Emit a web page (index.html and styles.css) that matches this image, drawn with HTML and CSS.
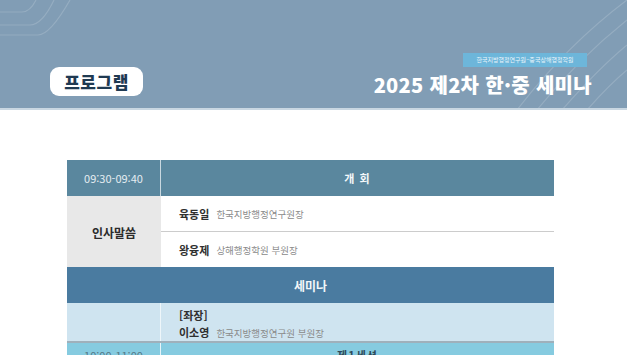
FILE: index.html
```html
<!DOCTYPE html>
<html lang="ko">
<head>
<meta charset="utf-8">
<link rel="stylesheet" href="styles.css">
</head>
<body>
<header class="hero">
  <svg class="deco deco-left" width="120" height="60" viewBox="0 0 120 60">
    <path d="M0 12 H22 Q30 12 36 0" />
    <path d="M0 25 H30 Q42 25 54 0" />
    <path d="M0 35 H38 Q50 35 70 0" />
  </svg>
  <svg class="deco deco-right" width="110" height="110" viewBox="0 0 110 110">
    <path d="M20 110 Q60 60 110 20" />
    <path d="M45 110 Q80 70 110 45" />
    <path d="M70 110 Q92 85 110 70" />
    <path d="M0 110 Q50 45 110 0" />
  </svg>
  <div class="hero-inner">
    <div class="pill">프로그램</div>
    <div class="hero-right">
      <div class="badge">한국지방행정연구원–중국상해행정학원</div>
      <h1 class="title">2025 제2차 한·중 세미나</h1>
    </div>
  </div>
</header>
<main class="wrap">
  <div class="table">
    <div class="row head">
      <div class="time">09:30-09:40</div>
      <div class="subject">개 회</div>
    </div>
    <div class="row greet">
      <div class="label">인사말씀</div>
      <div class="speakers">
        <div class="speaker"><b>육동일</b><span>한국지방행정연구원장</span></div>
        <div class="speaker"><b>왕융제</b><span>상해행정학원 부원장</span></div>
      </div>
    </div>
    <div class="section">세미나</div>
    <div class="row chair">
      <div class="blank"></div>
      <div class="chair-info">
        <b>[좌장]</b>
        <div><b>이소영</b><span>한국지방행정연구원 부원장</span></div>
      </div>
    </div>
    <div class="row session">
      <div class="time">10:00-11:00</div>
      <div class="subject">제1세션</div>
    </div>
  </div>
</main>
</body>
</html>
```

FILE: styles.css
```css
* { box-sizing: border-box; margin: 0; padding: 0; }
body {
  margin: 0;
  background: #ffffff;
  font-family: "Noto Sans CJK KR", "Noto Sans", sans-serif;
  overflow: hidden;
}
.hero {
  position: relative;
  height: 110px;
  background: #819db5;
  border-bottom: 2px solid #c9d7e2;
  overflow: hidden;
}
.deco { position: absolute; fill: none; stroke: rgba(255,255,255,0.16); stroke-width: 1.2; }
.deco-left { left: 0; top: 0; }
.deco-right { right: 0; top: 0; }
.hero-inner {
  position: relative;
  display: flex;
  justify-content: space-between;
  align-items: flex-end;
  padding: 53px 35px 0 50px;
}
.pill {
  width: 93px;
  height: 29px;
  background: #fff;
  border-radius: 9px;
  color: #1f3a52;
  font-weight: 900;
  font-size: 17px;
  letter-spacing: 0.5px;
  display: flex;
  align-items: center;
  justify-content: center;
  line-height: 1;
}
.hero-right {
  display: flex;
  flex-direction: column;
  align-items: flex-end;
}
.badge {
  width: 124px;
  height: 14px;
  background: #6db6da;
  color: #eaf5fb;
  font-size: 6px;
  display: flex;
  align-items: center;
  justify-content: center;
  line-height: 1;
  margin-right: 5px;
}
.title {
  margin-top: 6px;
  color: #ffffff;
  font-size: 20px;
  font-weight: 900;
  line-height: 23px;
  letter-spacing: 0.3px;
}
.wrap { padding: 50px 0 0 67px; }
.table { width: 487px; }
.row {
  display: grid;
  grid-template-columns: 94px 1fr;
}
.head { height: 36px; background: #5a879e; color: #fff; }
.time {
  display: flex; align-items: center; justify-content: center;
  font-size: 11px; color: #e3ecf1;
  border-right: 1px solid #c9d8e0;
}
.subject {
  display: flex; align-items: center; justify-content: center;
  font-size: 11px; font-weight: 700; color: #f4f8fa;
  letter-spacing: 1px;
}
.greet { height: 71px; }
.label {
  background: #e8e8e8;
  display: flex; align-items: center; justify-content: center;
  font-size: 12px; font-weight: 700; color: #2b2b2b;
  padding-top: 2px;
}
.speakers { display: flex; flex-direction: column; }
.speaker {
  flex: 1;
  display: flex; align-items: center;
  padding-left: 18px;
  font-size: 11px;
}
.speaker + .speaker { border-top: 1.5px solid #cccccc; }
.speaker b, .chair-info b { color: #2f2f2f; font-weight: 700; font-size: 11px; }
.speaker span, .chair-info span { color: #8a8a8a; font-size: 9.5px; margin-left: 7px; }
.section {
  height: 36px;
  background: #4a7ba0;
  color: #f3f7fa;
  font-weight: 700;
  font-size: 12px;
  display: flex; align-items: center; justify-content: center;
}
.chair { height: 40px; background: #cfe4f0; border-bottom: 2px solid #9fb0bb; }
.blank { border-right: 1px solid #eef6fa; }
.chair-info {
  padding: 5px 0 0 18px;
  display: flex; flex-direction: column;
  line-height: 15px;
}
.session { height: 30px; background: #86cbe0; }
.session .time { border-right: 1px solid #e6f4f9; align-items: flex-start; padding-top: 4px; color: #557a88; }
.session .subject { align-items: flex-start; padding-top: 4px; color: #2e4a58; }
```
